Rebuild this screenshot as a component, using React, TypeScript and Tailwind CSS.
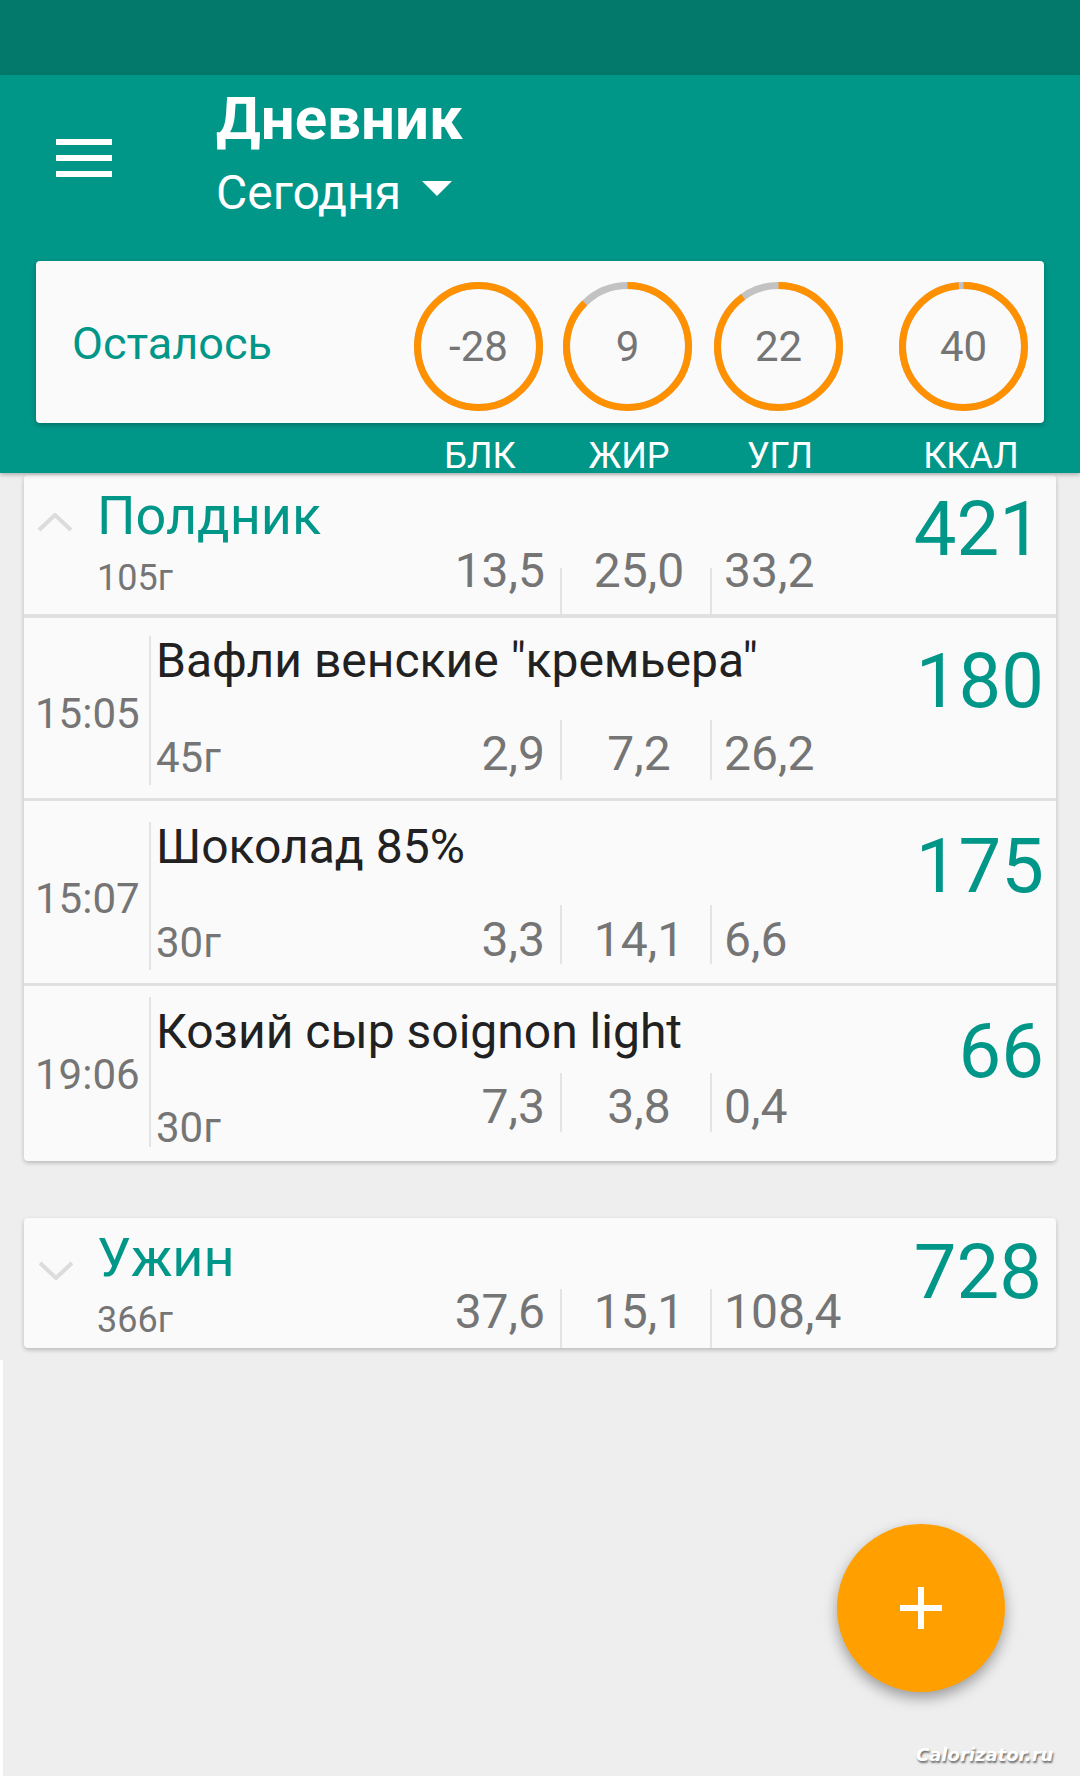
import React from "react";

type Food = {
  time: string;
  name: string;
  grams: string;
  b: string;
  f: string;
  c: string;
  kcal: string;
  h: string;
  timePt: string;
  timeDiv: string;
  namePt: string;
  gramsPb: string;
  macroPb: string;
  macroDiv: string;
  kcalPt: string;
};

const foods: Food[] = [
  {
    time: "15:05",
    name: 'Вафли венские "кремьера"',
    grams: "45г",
    b: "2,9",
    f: "7,2",
    c: "26,2",
    kcal: "180",
    h: "h-[180px]",
    timePt: "pt-[75px]",
    timeDiv: "mt-[18px] h-[149px]",
    namePt: "pt-[19px]",
    gramsPb: "pb-[19px]",
    macroPb: "pb-[20px]",
    macroDiv: "h-[60px] mb-[18px]",
    kcalPt: "pt-[25px]",
  },
  {
    time: "15:07",
    name: "Шоколад 85%",
    grams: "30г",
    b: "3,3",
    f: "14,1",
    c: "6,6",
    kcal: "175",
    h: "h-[182px]",
    timePt: "pt-[77px]",
    timeDiv: "mt-[21px] h-[148px]",
    namePt: "pt-[22px]",
    gramsPb: "pb-[19px]",
    macroPb: "pb-[19px]",
    macroDiv: "h-[59px] mb-[19px]",
    kcalPt: "pt-[27px]",
  },
  {
    time: "19:06",
    name: "Козий сыр soignon light",
    grams: "30г",
    b: "7,3",
    f: "3,8",
    c: "0,4",
    kcal: "66",
    h: "h-[175px]",
    timePt: "pt-[68px]",
    timeDiv: "mt-[11px] h-[150px]",
    namePt: "pt-[22px]",
    gramsPb: "pb-[12px]",
    macroPb: "pb-[30px]",
    macroDiv: "h-[59px] mb-[29px]",
    kcalPt: "pt-[27px]",
  },
];

const macroText = "text-[48px] leading-[48px] text-[#757575]";

function Ring({ value, progress }: { value: string; progress: number }) {
  const r = 61;
  const len = 2 * Math.PI * r;
  return (
    <div className="relative w-[129px] h-[129px] flex items-center justify-center">
      <svg width="129" height="129" viewBox="0 0 129 129" className="absolute inset-0">
        <circle cx="64.5" cy="64.5" r={r} fill="none" stroke="#c2c2c2" strokeWidth="7" />
        <circle
          cx="64.5"
          cy="64.5"
          r={r}
          fill="none"
          stroke="#ff9100"
          strokeWidth="7"
          strokeDasharray={`${len * progress} ${len}`}
          transform="rotate(-90 64.5 64.5)"
        />
      </svg>
      <span className="relative text-[42px] leading-[42px] text-[#757575]">{value}</span>
    </div>
  );
}

function MacroLine(props: {
  grams: string;
  b: string;
  f: string;
  c: string;
  gramsCls: string;
  macroPb: string;
  macroDiv: string;
}) {
  const { grams, b, f, c, gramsCls, macroPb, macroDiv } = props;
  return (
    <div className="flex-1 flex items-end">
      <div className={`flex-1 text-[#757575] ${gramsCls}`}>{grams}</div>
      <div className={`w-[120px] text-right pr-[15px] ${macroText} ${macroPb}`}>{b}</div>
      <div className={`w-[2px] bg-[#e3e3e3] ${macroDiv}`} />
      <div className={`w-[148px] text-center pl-[6px] ${macroText} ${macroPb}`}>{f}</div>
      <div className={`w-[2px] bg-[#e3e3e3] ${macroDiv}`} />
      <div className={`w-[189px] pl-[12px] ${macroText} ${macroPb}`}>{c}</div>
    </div>
  );
}

function Chevron({ up }: { up: boolean }) {
  return (
    <svg width="36" height="19" viewBox="0 0 36 19">
      <polyline
        points={up ? "2,17 18,2 34,17" : "2,2 18,17 34,2"}
        fill="none"
        stroke="#dcdcdc"
        strokeWidth="4"
      />
    </svg>
  );
}

function FoodRow({ food }: { food: Food }) {
  return (
    <div className={`flex ${food.h}`}>
      <div className="w-[127px] flex justify-between">
        <div className={`pl-[11px] text-[42px] leading-[42px] text-[#757575] ${food.timePt}`}>{food.time}</div>
        <div className={`w-[2px] bg-[#e3e3e3] ${food.timeDiv}`} />
      </div>
      <div className="flex-1 flex flex-col pl-[5px]">
        <div className={`text-[48px] leading-[48px] text-[#212121] whitespace-nowrap ${food.namePt}`}>{food.name}</div>
        <MacroLine
          grams={food.grams}
          b={food.b}
          f={food.f}
          c={food.c}
          gramsCls={`text-[42px] leading-[42px] ${food.gramsPb}`}
          macroPb={food.macroPb}
          macroDiv={food.macroDiv}
        />
      </div>
      <div className={`w-[155px] text-right pr-[12px] text-[76px] leading-[76px] text-[#009688] ${food.kcalPt}`}>
        {food.kcal}
      </div>
    </div>
  );
}

export default function App() {
  return (
    <div className="w-[1080px] h-[1776px] bg-[#eeeeee] relative overflow-hidden flex flex-col font-['Roboto','Noto_Sans',sans-serif]">
      <div className="h-[75px] shrink-0 bg-[#02796b]" />

      <div className="shrink-0 bg-[#009688] relative z-10 shadow-[0_2px_4px_rgba(0,0,0,0.25)]">
        <div className="h-[186px] flex pt-[14px]">
          <div className="w-[216px] pl-[56px] pt-[50px]">
            <div className="flex flex-col gap-[10px]">
              <div className="w-[56px] h-[6px] bg-white" />
              <div className="w-[56px] h-[6px] bg-white" />
              <div className="w-[56px] h-[6px] bg-white" />
            </div>
          </div>
          <div className="flex flex-col text-white">
            <div className="text-[60px] leading-[60px] font-bold">Дневник</div>
            <div className="mt-[20px] flex items-start">
              <span className="text-[48px] leading-[48px]">Сегодня</span>
              <svg width="30" height="15" viewBox="0 0 30 15" className="ml-[21px] mt-[12px]">
                <polygon points="0,0 30,0 15,15" fill="#ffffff" />
              </svg>
            </div>
          </div>
        </div>

        <div className="mx-[36px] h-[162px] bg-[#fafafa] rounded-[4px] shadow-[0_2px_5px_rgba(0,0,0,0.25)] flex">
          <div className="flex-1 pl-[36px] pt-[60px] text-[45px] leading-[45px] text-[#009688]">Осталось</div>
          <div className="flex pt-[21px] pr-[16px]">
            <Ring value="-28" progress={1} />
            <div className="ml-[20px]">
              <Ring value="9" progress={0.875} />
            </div>
            <div className="ml-[22px]">
              <Ring value="22" progress={0.9} />
            </div>
            <div className="ml-[56px]">
              <Ring value="40" progress={0.986} />
            </div>
          </div>
        </div>

        <div className="h-[50px] flex justify-end pr-[52px] pt-[15px] text-[36px] leading-[36px] text-white">
          <div className="w-[129px] text-center pl-[3px]">БЛК</div>
          <div className="w-[129px] ml-[20px] text-center pl-[3px]">ЖИР</div>
          <div className="w-[129px] ml-[22px] text-center pl-[3px]">УГЛ</div>
          <div className="w-[129px] ml-[56px] text-center pl-[15px]">ККАЛ</div>
        </div>
      </div>

      <div className="shrink-0 px-[24px] pt-[2px]">
        <div className="bg-[#fafafa] rounded-[4px] shadow-[0_2px_4px_rgba(0,0,0,0.22)] overflow-hidden">
          <div className="flex h-[139px]">
            <div className="w-[73px] pl-[13px] pt-[38px]">
              <Chevron up />
            </div>
            <div className="flex-1 flex flex-col">
              <div className="pt-[14px] text-[54px] leading-[54px] text-[#009688]">Полдник</div>
              <MacroLine
                grams="105г"
                b="13,5"
                f="25,0"
                c="33,2"
                gramsCls="text-[36px] leading-[36px] pb-[18px]"
                macroPb="pb-[19px]"
                macroDiv="h-[46px]"
              />
            </div>
            <div className="w-[155px] text-right pr-[14px] pt-[16px] text-[76px] leading-[76px] text-[#009688]">421</div>
          </div>
          <div className="h-[4px] bg-[#e0e0e0]" />
          <FoodRow food={foods[0]} />
          <div className="h-[3px] bg-[#e0e0e0]" />
          <FoodRow food={foods[1]} />
          <div className="h-[3px] bg-[#e0e0e0]" />
          <FoodRow food={foods[2]} />
        </div>

        <div className="mt-[57px] bg-[#fafafa] rounded-[4px] shadow-[0_2px_4px_rgba(0,0,0,0.22)] overflow-hidden">
          <div className="flex h-[130px]">
            <div className="w-[73px] pl-[14px] pt-[43px]">
              <Chevron up={false} />
            </div>
            <div className="flex-1 flex flex-col">
              <div className="pt-[13px] text-[54px] leading-[54px] text-[#009688]">Ужин</div>
              <MacroLine
                grams="366г"
                b="37,6"
                f="15,1"
                c="108,4"
                gramsCls="text-[36px] leading-[36px] pb-[10px]"
                macroPb="pb-[12px]"
                macroDiv="h-[59px]"
              />
            </div>
            <div className="w-[155px] text-right pr-[14px] pt-[16px] text-[76px] leading-[76px] text-[#009688]">728</div>
          </div>
        </div>
      </div>

      <div className="flex-1 pt-[12px]">
        <div className="h-full w-[3px] bg-white" />
      </div>

      <button className="absolute left-[837px] top-[1524px] w-[168px] h-[168px] rounded-full bg-[#ffa000] shadow-[0_6px_14px_rgba(0,0,0,0.35)] flex items-center justify-center">
        <svg width="42" height="42" viewBox="0 0 42 42">
          <rect x="18" y="0" width="6" height="42" fill="#ffffff" />
          <rect x="0" y="18" width="42" height="6" fill="#ffffff" />
        </svg>
      </button>

      <div className="absolute left-[916px] top-[1741px] text-[18px] font-bold italic text-white font-['DejaVu_Sans',sans-serif] [text-shadow:1px_2px_2px_rgba(0,0,0,0.55)]">
        Calorizator.ru
      </div>
    </div>
  );
}
